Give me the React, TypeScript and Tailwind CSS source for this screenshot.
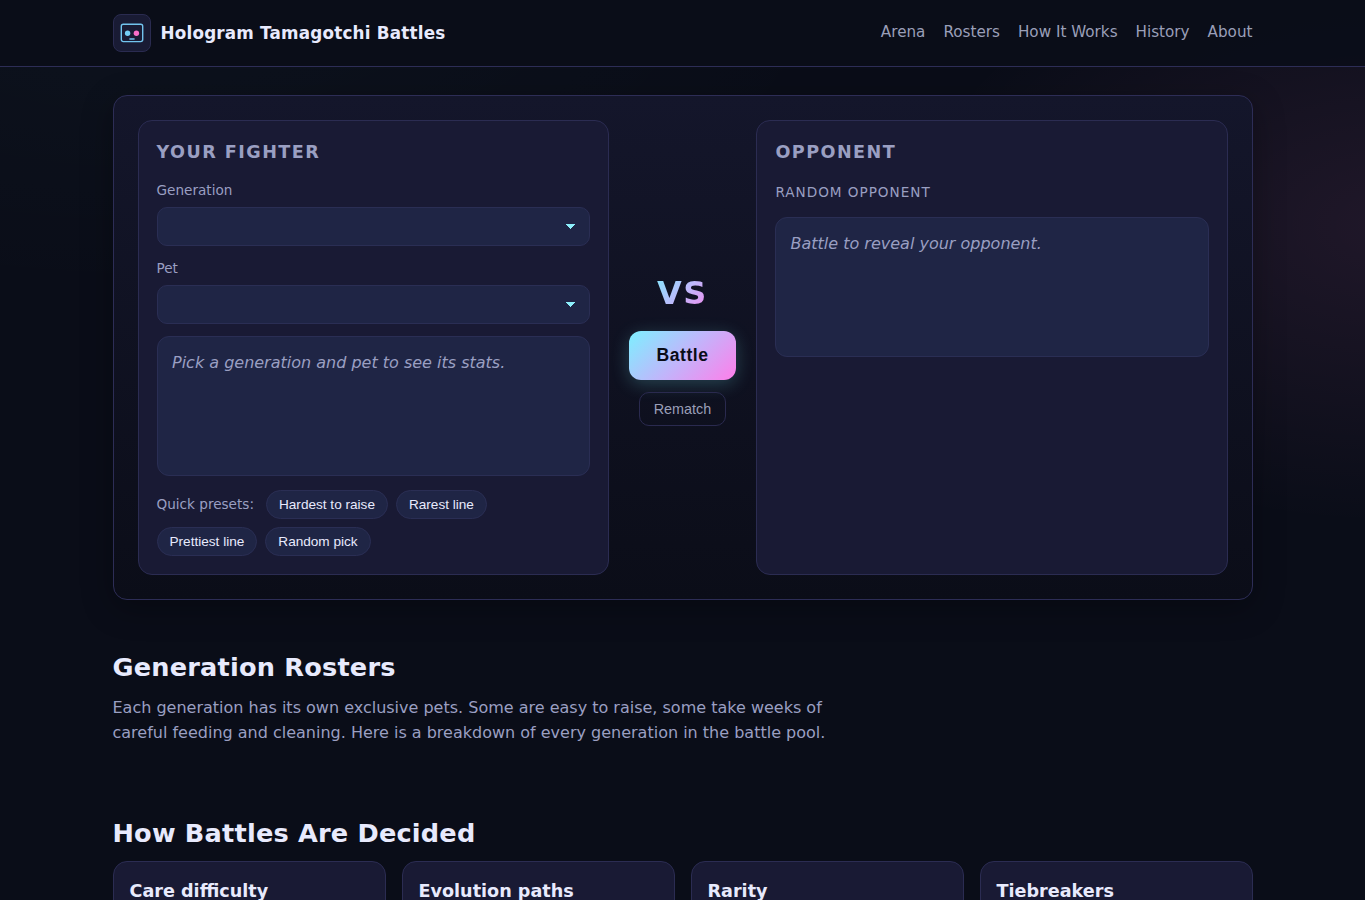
import React from "react";

const navLinks = ["Arena", "Rosters", "How It Works", "History", "About"];
const presets = ["Hardest to raise", "Rarest line", "Prettiest line", "Random pick"];
const factors = ["Care difficulty", "Evolution paths", "Rarity", "Tiebreakers"];

function Logo() {
  return (
    <span className="grid size-[38px] place-items-center rounded-[8px] border border-[#2a2b50] bg-[#191b34]">
      <svg width="24" height="24" viewBox="0 0 24 24" fill="none">
        <rect x="1.3" y="3.2" width="21.4" height="17.4" rx="2" stroke="#72c4ee" strokeWidth="1.4" />
        <circle cx="7.6" cy="12.2" r="2.7" fill="#74cdf5" />
        <circle cx="16.4" cy="12.2" r="2.7" fill="#fb6ec9" />
        <path d="M10 18h4" stroke="#72c4ee" strokeWidth="1.6" strokeLinecap="round" />
      </svg>
    </span>
  );
}

function SelectField({ label }: { label: string }) {
  return (
    <div className="flex flex-col gap-1.5">
      <label className="text-[13.6px] leading-[21px] text-[#9a9fc2]">{label}</label>
      <button
        aria-label={label}
        className="flex h-[39px] w-full items-center justify-end rounded-[10px] border border-[#2a2e54] bg-[#1f2545] pr-[13px]"
      >
        <svg width="11" height="6" viewBox="0 0 11 6" shapeRendering="crispEdges">
          <path d="M0.4 0.2h10L5.4 5.4z" fill="#8ceffb" />
        </svg>
      </button>
    </div>
  );
}

function Hint({ children }: { children: React.ReactNode }) {
  return (
    <div className="h-[140px] rounded-[12px] border border-[#2a2e54] bg-[#1f2545] px-[14.5px] py-[13px]">
      <p className="text-base leading-[25.6px] text-[#9a9fc2] italic">{children}</p>
    </div>
  );
}

const panel = "rounded-[14px] border border-[#2b2c52] bg-[#191a34] p-[18px]";
const panelTitle = "text-[17.6px] leading-[26px] font-bold tracking-[1.45px] text-[#9a9fc2] uppercase";
const sectionTitle = "text-[25.6px] font-bold leading-[40px] tracking-[0.2px]";

export default function App() {
  return (
    <div className="h-[900px] overflow-hidden bg-[#0a0d18] bg-[radial-gradient(ellipse_480px_300px_at_102%_25%,rgba(255,126,214,0.09),transparent),radial-gradient(ellipse_700px_300px_at_12%_0%,rgba(125,249,255,0.025),transparent)] font-['DejaVu_Sans',sans-serif] text-[#e8eafd]">
      <header className="h-[67px] border-b border-[#2d2d56] bg-[#0a0d18]/90">
        <div className="mx-auto flex h-[66px] w-[1140px] items-center justify-between">
          <div className="flex items-center gap-2.5">
            <Logo />
            <span className="pt-[2px] text-[16.8px] font-bold tracking-[0.2px]">Hologram Tamagotchi Battles</span>
          </div>
          <nav className="flex gap-[18px] pb-[2px] text-[15.2px] text-[#9a9fb8]">
            {navLinks.map((l) => (
              <a key={l}>{l}</a>
            ))}
          </nav>
        </div>
      </header>

      <main className="mx-auto w-[1140px] pt-7">
        <section className="grid h-[505px] grid-cols-[1fr_auto_1fr] gap-5 rounded-[14px] border border-[#2d2d56] bg-linear-to-b from-[#14162b] to-[#0b0d18] p-6 shadow-[0_8px_32px_rgba(0,0,0,0.3)]">
          <div className={panel}>
            <h2 className={panelTitle}>Your Fighter</h2>
            <div className="mt-[15px] flex flex-col gap-3">
              <SelectField label="Generation" />
              <SelectField label="Pet" />
              <Hint>Pick a generation and pet to see its stats.</Hint>
            </div>
            <div className="mt-3.5 flex flex-wrap items-center gap-2">
              <span className="mr-1 text-[13.6px] text-[#9a9fc2]">Quick presets:</span>
              {presets.map((p) => (
                <button
                  key={p}
                  className="h-[29px] rounded-full border border-[#2a2e54] bg-[#1f2545] px-3 pt-[2px] font-['Liberation_Sans',sans-serif] text-[13.6px]"
                >
                  {p}
                </button>
              ))}
            </div>
          </div>

          <div className="flex w-[107px] flex-col items-center justify-center pb-[2px]">
            <span className="bg-[linear-gradient(135deg,#7df0ff,#bdb9fc_50%,#ff7eea)] bg-clip-text text-[32px] leading-[51px] font-bold tracking-[1.6px] text-transparent">
              VS
            </span>
            <button className="mt-3 h-[49px] w-full rounded-[12px] bg-[linear-gradient(135deg,#7df0ff,#c0b6fb_50%,#ff7eea)] font-['Liberation_Sans',sans-serif] text-[17.6px] font-bold tracking-[0.5px] text-[#0a0c17] shadow-[0_4px_18px_rgba(125,249,255,0.22)]">
              Battle
            </button>
            <button className="mt-3 h-[34px] rounded-[10px] border border-[#2a2a4f] px-3.5 pt-[2px] font-['Liberation_Sans',sans-serif] text-[14.4px] text-[#9a9fb8]">
              Rematch
            </button>
          </div>

          <div className={panel}>
            <h2 className={`${panelTitle} pl-[0.4px]`}>Opponent</h2>
            <p className="mt-4 mb-3.5 pl-[0.4px] text-[13.6px] leading-[22px] tracking-[0.98px] text-[#9a9fc2] uppercase">
              Random opponent
            </p>
            <Hint>Battle to reveal your opponent.</Hint>
          </div>
        </section>

        <section className="mt-[47px]">
          <h2 className={sectionTitle}>Generation Rosters</h2>
          <p className="mt-2 w-[720px] text-base leading-[25px] text-[#9a9fc2]">
            Each generation has its own exclusive pets. Some are easy to raise, some take weeks of careful feeding and
            cleaning. Here is a breakdown of every generation in the battle pool.
          </p>
        </section>

        <section className="mt-17">
          <h2 className={sectionTitle}>How Battles Are Decided</h2>
          <div className="mt-2 grid grid-cols-4 gap-4">
            {factors.map((f) => (
              <article key={f} className="h-40 rounded-[14px] border border-[#2b2c52] bg-[#191a34] p-4">
                <h3 className="text-[17.6px] leading-[26px] font-bold">{f}</h3>
              </article>
            ))}
          </div>
        </section>
      </main>
    </div>
  );
}
